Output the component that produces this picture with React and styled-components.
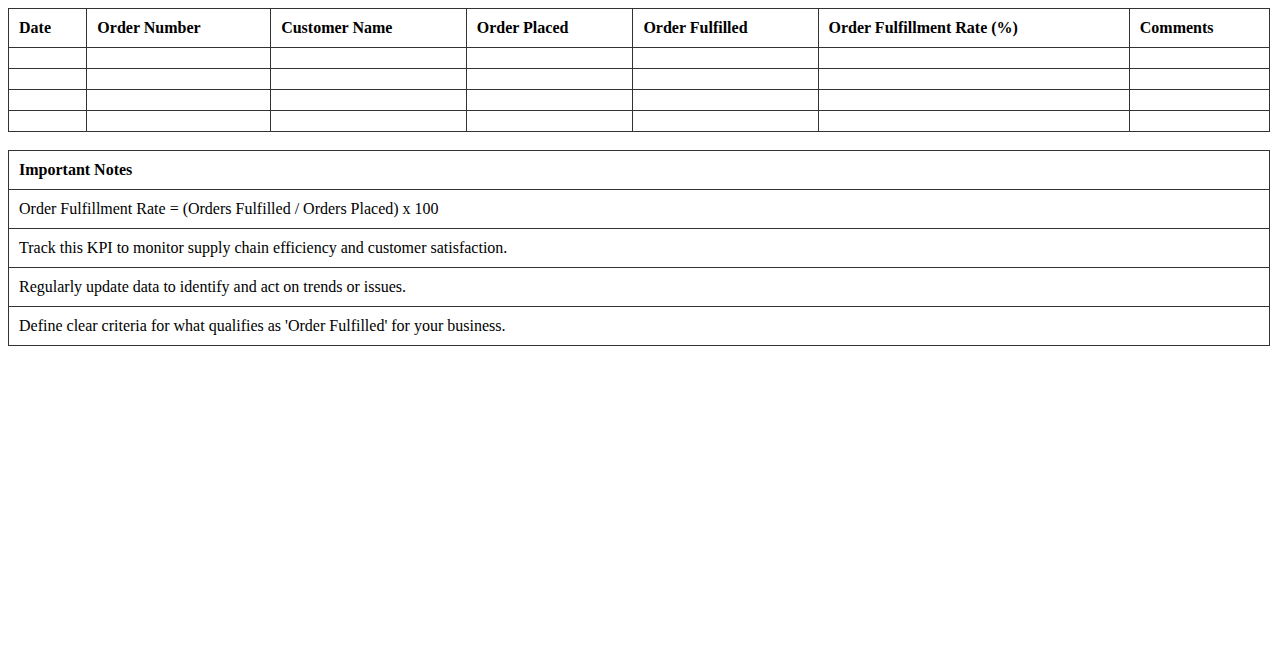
import React from 'react';
import styled, { createGlobalStyle } from 'styled-components';

const GlobalStyle = createGlobalStyle`
	body {
		margin: 8px;
		font-family: "Liberation Serif", "Times New Roman", serif;
		font-size: 16px;
		color: #000;
		background: #fff;
	}
`;

const columns = [
	'Date',
	'Order Number',
	'Customer Name',
	'Order Placed',
	'Order Fulfilled',
	'Order Fulfillment Rate (%)',
	'Comments',
];

const notes = [
	'Order Fulfillment Rate = (Orders Fulfilled / Orders Placed) x 100',
	'Track this KPI to monitor supply chain efficiency and customer satisfaction.',
	'Regularly update data to identify and act on trends or issues.',
	"Define clear criteria for what qualifies as 'Order Fulfilled' for your business.",
];

function App() {
	return (
		<>
			<GlobalStyle />
			<Table>
				<thead>
					<tr>
						{columns.map(col => (
							<HeadCell key={col}>{col}</HeadCell>
						))}
					</tr>
				</thead>
				<tbody>
					{[0, 1, 2, 3].map(row => (
						<tr key={row}>
							{columns.map(col => (
								<Cell key={col} />
							))}
						</tr>
					))}
				</tbody>
			</Table>
			<NotesTable>
				<thead>
					<tr>
						<HeadCell>Important Notes</HeadCell>
					</tr>
				</thead>
				<tbody>
					{notes.map(note => (
						<tr key={note}>
							<Cell>{note}</Cell>
						</tr>
					))}
				</tbody>
			</NotesTable>
		</>
	);
}

const Table = styled.table`
	width: 100%;
	border-collapse: collapse;
`;

const NotesTable = styled(Table)`
	margin-top: 18px;
`;

const Cell = styled.td`
	border: 1px solid #333;
	padding: 10px;
	text-align: left;
`;

const HeadCell = styled.th`
	border: 1px solid #333;
	padding: 10px;
	text-align: left;
	font-weight: bold;
`;

export default App;
